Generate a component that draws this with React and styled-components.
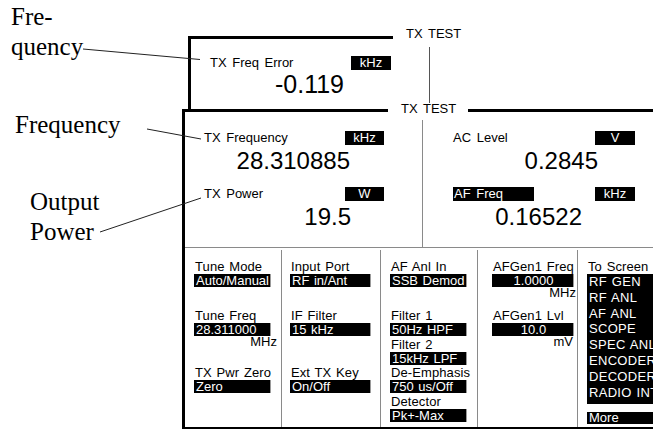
import React from 'react';
import styled, { createGlobalStyle } from 'styled-components';

const GlobalStyle = createGlobalStyle`
  *, *::before, *::after { box-sizing: border-box; }
  html, body { margin: 0; padding: 0; background: #fff; }
  body {
    font-family: "Liberation Sans", Arial, Helvetica, sans-serif;
    color: #000;
  }
`;

const Page = styled.div`
  position: relative;
  width: 653px;
  height: 430px;
  overflow: hidden;
  display: flex;
`;

// figure callouts on the left
const Callouts = styled.div`
  width: 182px;
  flex: none;
  display: flex;
  flex-direction: column;
  padding-top: 2px;
  font-family: "Liberation Serif", "Times New Roman", serif;
  font-size: 25px;
  line-height: 30px;
`;

const Callout = styled.div`
  margin-left: ${p => p.$x}px;
  margin-top: ${p => p.$gap || 0}px;
`;

const Leaders = styled.svg`
  position: absolute;
  left: 0;
  top: 0;
  pointer-events: none;
`;

const Panel = styled.div`
  flex: 1;
  min-width: 0;
  display: flex;
  flex-direction: column;
  padding: 27px 0 1px;
  font-size: 13px;
`;

const TopRow = styled.div`
  display: flex;
  height: 82px;
  flex: none;
`;

const TopScreen = styled.div`
  width: 205px;
  flex: none;
  margin: 9px 0 0 6px;
  border-left: 3px solid #000;
  border-top: 3px solid #000;
  padding: 17px 2px 0 19px;
`;

const TitleStack = styled.div`
  margin-left: 13px;
  display: flex;
  flex-direction: column;
`;

const ScreenTitle = styled.div`
  line-height: 14px;
  word-spacing: 2px;
  white-space: nowrap;
`;

const Connector = styled.div`
  flex: 1;
  width: 1px;
  margin: 6px 0 6px 23px;
  background: #555;
`;

const MainScreen = styled.div`
  flex: 1;
  display: flex;
  flex-direction: column;
`;

const MainHeader = styled.div`
  display: flex;
  align-items: center;
  height: 3px;
  flex: none;
`;

const HeaderRule = styled.div`
  height: 3px;
  background: #000;
  ${p => (p.$w ? `width: ${p.$w}px; flex: none;` : 'flex: 1;')}
`;

const MainTitle = styled(ScreenTitle)`
  margin: 0 12px 4px 13px;
`;

const MainBody = styled.div`
  flex: 1;
  display: flex;
  flex-direction: column;
  border-left: 3px solid #000;
  border-bottom: 2px solid #000;
`;

// upper readouts
const ReadSection = styled.div`
  height: 136px;
  flex: none;
  display: flex;
  border-bottom: 1px solid #8a8a8a;
`;

const Half = styled.div`
  width: ${p => (p.$w ? `${p.$w}px` : 'auto')};
  flex: ${p => (p.$w ? 'none' : '1')};
  padding: 19px ${p => p.$right}px 0 ${p => p.$left}px;
`;

const Divider = styled.div`
  width: 1px;
  margin-top: 8px;
  background: #8a8a8a;
`;

const Readout = styled.div`
  & + & {
    margin-top: 14px;
  }
`;

const ReadHead = styled.div`
  display: flex;
  justify-content: space-between;
  align-items: center;
  height: 14px;
`;

const Label = styled.div`
  line-height: 14px;
  word-spacing: 2px;
  white-space: nowrap;
`;

const Chip = styled.div`
  width: ${p => p.$w}px;
  height: 14px;
  line-height: 14px;
  background: #000;
  color: #fff;
  text-align: ${p => (p.$left ? 'left' : 'center')};
  padding-left: ${p => (p.$left ? '1px' : '0')};
  word-spacing: 2px;
  white-space: nowrap;
`;

const BigValue = styled.div`
  margin-top: ${p => p.$gap ?? 4}px;
  padding-right: ${p => p.$inset}px;
  font-size: ${p => p.$size || 24}px;
  line-height: ${p => p.$size || 24}px;
  text-align: right;
`;

// lower soft-key fields
const Controls = styled.div`
  flex: 1;
  display: flex;
  padding-top: 2px;
`;

const Column = styled.div`
  width: ${p => (p.$w ? `${p.$w}px` : 'auto')};
  flex: ${p => (p.$w ? 'none' : '1')};
  border-left: ${p => (p.$first ? 'none' : '1px solid #8a8a8a')};
  padding: 10px 0 0 ${p => p.$pad}px;
  display: grid;
  grid-template-rows: 49px repeat(4, 28.5px);
  align-content: start;
`;

const MenuColumn = styled.div`
  flex: 1;
  border-left: 1px solid #8a8a8a;
  padding: 10px 0 0 9px;
  display: flex;
  flex-direction: column;
`;

const Field = styled.div`
  grid-row: ${p => p.$row};
  align-self: start;
  display: flex;
  flex-direction: column;
  & > * {
    flex: none;
  }
`;

const FieldLabel = styled.div`
  line-height: 14px;
  padding-left: 1px;
  word-spacing: 1px;
  letter-spacing: 0.1px;
  white-space: nowrap;
`;

const FieldBox = styled.div`
  width: ${p => p.$w}px;
  height: 13px;
  line-height: 13px;
  padding-left: 2px;
  background: #000;
  color: #fff;
  text-align: ${p => (p.$center ? 'center' : 'left')};
  box-shadow: 1px 0 0 #9a9a9a;
  white-space: nowrap;
  overflow: hidden;
  word-spacing: 1px;
`;

const Unit = styled.div`
  line-height: 12px;
  text-align: right;
  padding-right: ${p => p.$pad}px;
`;

const MenuBox = styled.div`
  width: 90px;
  background: #000;
  color: #fff;
  padding: 0 0 4px 2px;
`;

const MenuItem = styled.div`
  line-height: 15.8px;
  letter-spacing: 0.3px;
  word-spacing: 1px;
  white-space: nowrap;
`;

const MoreKey = styled.div`
  width: 90px;
  height: 12px;
  line-height: 12px;
  margin-top: 8px;
  padding-left: 2px;
  background: #000;
  color: #fff;
`;

const columns = [
  {
    w: 96, pad: 9, first: true,
    fields: [
      { row: 1, label: 'Tune Mode', value: 'Auto/Manual', bw: 76 },
      { row: 2, label: 'Tune Freq', value: '28.311000', bw: 76, unit: 'MHz', unitPad: 4 },
      { row: 4, label: 'TX Pwr Zero', value: 'Zero', bw: 76 },
    ],
  },
  {
    w: 99, pad: 8,
    fields: [
      { row: 1, label: 'Input Port', value: 'RF in/Ant', bw: 80 },
      { row: 2, label: 'IF Filter', value: '15 kHz', bw: 80 },
      { row: 4, label: 'Ext TX Key', value: 'On/Off', bw: 80 },
    ],
  },
  {
    w: 97, pad: 9,
    fields: [
      { row: 1, label: 'AF Anl In', value: 'SSB Demod', bw: 76 },
      { row: 2, label: 'Filter 1', value: '50Hz HPF', bw: 76 },
      { row: 3, label: 'Filter 2', value: '15kHz LPF', bw: 76 },
      { row: 4, label: 'De-Emphasis', value: '750 us/Off', bw: 76 },
      { row: 5, label: 'Detector', value: 'Pk+-Max', bw: 76 },
    ],
  },
  {
    w: 100, pad: 14,
    fields: [
      { row: 1, label: 'AFGen1 Freq', value: '1.0000', bw: 81, center: true, unit: 'MHz', unitPad: 1 },
      { row: 2, label: 'AFGen1 Lvl', value: '10.0', bw: 81, center: true, unit: 'mV', unitPad: 4 },
    ],
  },
];

const screens = ['RF GEN', 'RF ANL', 'AF ANL', 'SCOPE', 'SPEC ANL', 'ENCODER', 'DECODER', 'RADIO INT'];

export default function App() {
  return (
    <Page>
      <GlobalStyle />
      <Callouts>
        <Callout $x={11}>Fre-<br />quency</Callout>
        <Callout $x={15} $gap={48}>Frequency</Callout>
        <Callout $x={30} $gap={47}>Output<br />Power</Callout>
      </Callouts>

      <Panel>
        <TopRow>
          <TopScreen>
            <ReadHead>
              <Label>TX Freq Error</Label>
              <Chip $w={40}>kHz</Chip>
            </ReadHead>
            <BigValue $gap={2} $inset={47} $size={25}>-0.119</BigValue>
          </TopScreen>
          <TitleStack>
            <ScreenTitle>TX TEST</ScreenTitle>
            <Connector />
          </TitleStack>
        </TopRow>

        <MainScreen>
          <MainHeader>
            <HeaderRule $w={206} />
            <MainTitle>TX TEST</MainTitle>
            <HeaderRule />
          </MainHeader>
          <MainBody>
            <ReadSection>
              <Half $w={237} $left={19} $right={38}>
                <Readout>
                  <ReadHead>
                    <Label>TX Frequency</Label>
                    <Chip $w={39}>kHz</Chip>
                  </ReadHead>
                  <BigValue $inset={34}>28.310885</BigValue>
                </Readout>
                <Readout>
                  <ReadHead>
                    <Label>TX Power</Label>
                    <Chip $w={39}>W</Chip>
                  </ReadHead>
                  <BigValue $inset={33}>19.5</BigValue>
                </Readout>
              </Half>
              <Divider />
              <Half $left={30} $right={18}>
                <Readout>
                  <ReadHead>
                    <Label>AC Level</Label>
                    <Chip $w={40}>V</Chip>
                  </ReadHead>
                  <BigValue $inset={37}>0.2845</BigValue>
                </Readout>
                <Readout>
                  <ReadHead>
                    <Chip $w={81} $left>AF Freq</Chip>
                    <Chip $w={40}>kHz</Chip>
                  </ReadHead>
                  <BigValue $inset={53}>0.16522</BigValue>
                </Readout>
              </Half>
            </ReadSection>

            <Controls>
              {columns.map((col, i) => (
                <Column key={i} $w={col.w} $pad={col.pad} $first={col.first}>
                  {col.fields.map(f => (
                    <Field key={f.label} $row={f.row}>
                      <FieldLabel>{f.label}</FieldLabel>
                      <FieldBox $w={f.bw} $center={f.center}>{f.value}</FieldBox>
                      {f.unit && <Unit $pad={f.unitPad}>{f.unit}</Unit>}
                    </Field>
                  ))}
                </Column>
              ))}
              <MenuColumn>
                <FieldLabel>To Screen</FieldLabel>
                <MenuBox>
                  {screens.map(s => <MenuItem key={s}>{s}</MenuItem>)}
                </MenuBox>
                <MoreKey>More</MoreKey>
              </MenuColumn>
            </Controls>
          </MainBody>
        </MainScreen>
      </Panel>

      <Leaders width="653" height="430" viewBox="0 0 653 430">
        <g stroke="#222" strokeWidth="1" fill="none">
          <line x1="83" y1="49" x2="200" y2="59.5" />
          <line x1="147" y1="129" x2="201" y2="139" />
          <line x1="100" y1="232" x2="201" y2="198" />
        </g>
      </Leaders>
    </Page>
  );
}
